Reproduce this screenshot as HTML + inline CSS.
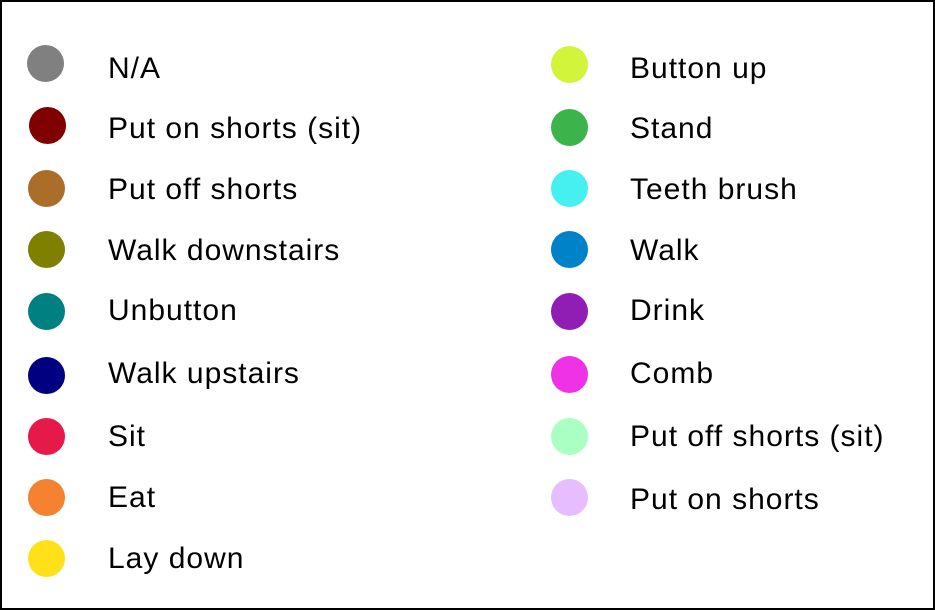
<!DOCTYPE html><html><head><style>
body{margin:0;width:935px;height:610px;background:#fff;position:relative;overflow:hidden;font-family:"Liberation Sans",sans-serif}
.b{position:absolute;left:0;top:0;width:931px;height:606px;border:2px solid #000}
.c{position:absolute;width:37px;height:37px;border-radius:50%}
.t{position:absolute;font-size:30px;line-height:29px;letter-spacing:1px;white-space:nowrap;color:#000}
</style></head><body><div class="b"></div>
<div class="c" style="left:27px;top:45px;background:#808080"></div><div class="t" style="left:108px;top:54px">N/A</div>
<div class="c" style="left:29px;top:107px;background:#800000"></div><div class="t" style="left:108px;top:114px">Put on shorts (sit)</div>
<div class="c" style="left:28px;top:170px;background:#aa6e28"></div><div class="t" style="left:108px;top:175px">Put off shorts</div>
<div class="c" style="left:28px;top:231px;background:#808000"></div><div class="t" style="left:108px;top:236px">Walk downstairs</div>
<div class="c" style="left:28px;top:293px;background:#008080"></div><div class="t" style="left:108px;top:296px">Unbutton</div>
<div class="c" style="left:28px;top:357px;background:#000080"></div><div class="t" style="left:108px;top:359px">Walk upstairs</div>
<div class="c" style="left:28px;top:418px;background:#e6194b"></div><div class="t" style="left:108px;top:422px">Sit</div>
<div class="c" style="left:28px;top:479px;background:#f58231"></div><div class="t" style="left:108px;top:483px">Eat</div>
<div class="c" style="left:28px;top:540px;background:#ffe119"></div><div class="t" style="left:108px;top:544px">Lay down</div>
<div class="c" style="left:551px;top:46px;background:#d2f53c"></div><div class="t" style="left:630px;top:54px">Button up</div>
<div class="c" style="left:551px;top:109px;background:#3cb44b"></div><div class="t" style="left:630px;top:114px">Stand</div>
<div class="c" style="left:551px;top:170px;background:#46f0f0"></div><div class="t" style="left:630px;top:175px">Teeth brush</div>
<div class="c" style="left:551px;top:231px;background:#0082c8"></div><div class="t" style="left:630px;top:236px">Walk</div>
<div class="c" style="left:551px;top:293px;background:#911eb4"></div><div class="t" style="left:630px;top:296px">Drink</div>
<div class="c" style="left:551px;top:356px;background:#f032e6"></div><div class="t" style="left:630px;top:359px">Comb</div>
<div class="c" style="left:551px;top:418px;background:#aaffc3"></div><div class="t" style="left:630px;top:422px">Put off shorts (sit)</div>
<div class="c" style="left:551px;top:479px;background:#e6beff"></div><div class="t" style="left:630px;top:485px">Put on shorts</div>
</body></html>
